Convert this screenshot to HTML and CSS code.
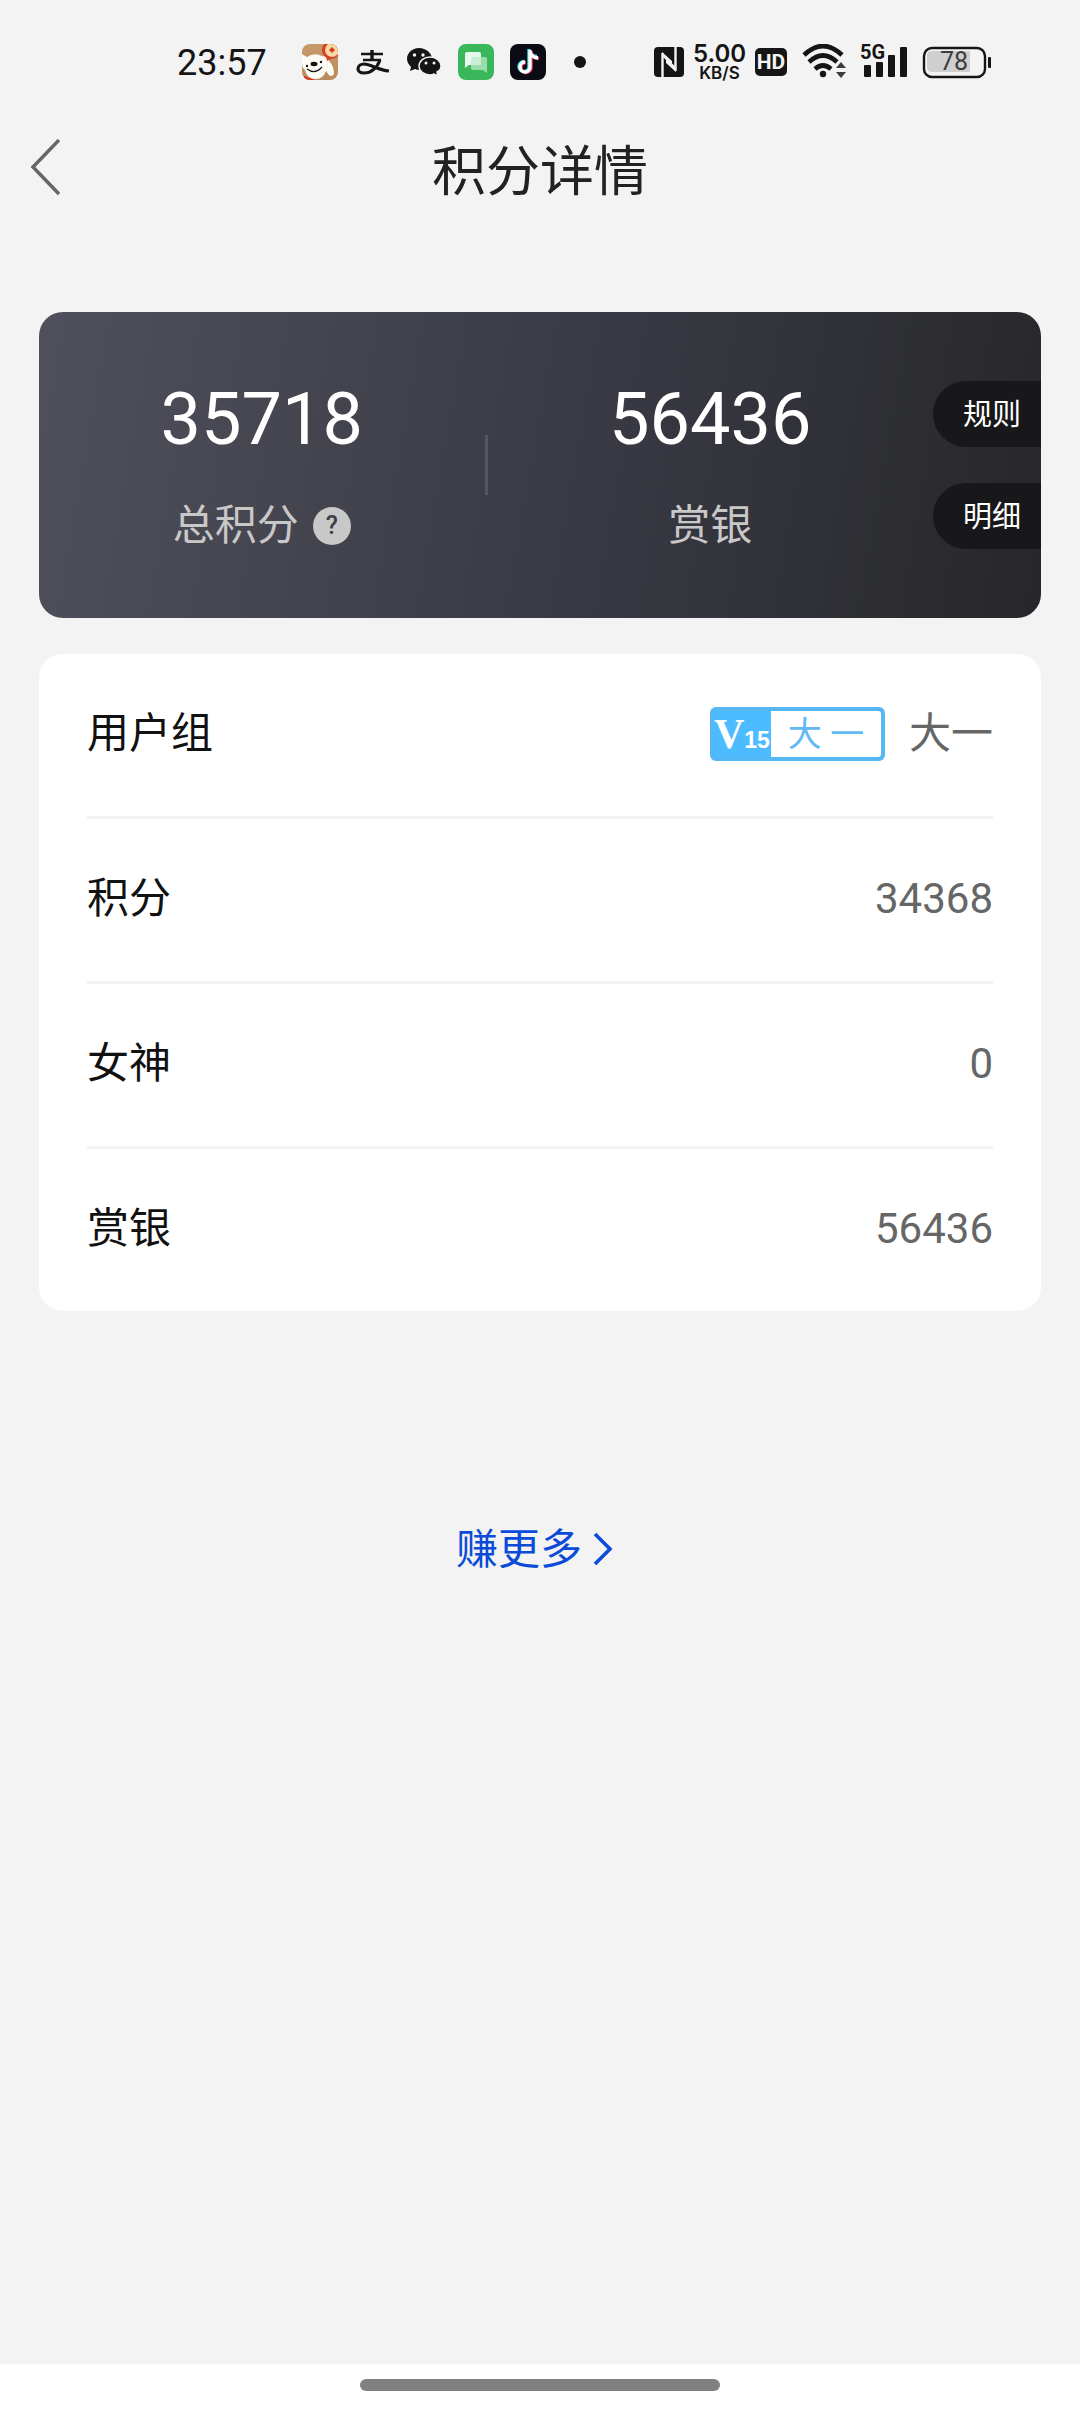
FILE: index.html
```html
<!DOCTYPE html>
<html lang="zh-CN">
<head>
    <meta charset="UTF-8">
    <title>积分详情</title>
    <meta name="viewport" content="width=device-width, initial-scale=1">
    <link rel="stylesheet" href="styles.css">
</head>
<body>
    <div class="status-bar">
        <div class="status-left">
            <span class="time">23:57</span>
            <div class="app-icons">
                <svg viewBox="0 0 36 36">
                    <defs>
                        <linearGradient id="tan" x1="0" y1="0" x2="0" y2="1">
                            <stop offset="0" stop-color="#c79a69"/>
                            <stop offset="1" stop-color="#b98a5b"/>
                        </linearGradient>
                        <clipPath id="tile"><rect width="36" height="36" rx="8"/></clipPath>
                    </defs>
                    <g clip-path="url(#tile)">
                        <rect width="36" height="36" fill="url(#tan)"/>
                        <path d="M0 10q3 2 5 3q7-5 15-1q5 0 7 5q5 5 5 13q-3 4-6 0q-1-2-2-3q-3 8-10 8Q5 35 3 26Q0 24 0 19z" fill="#fdfbf6"/>
                        <path d="M2 32q5 2 11 4H2z" fill="#d8301f"/>
                        <ellipse cx="12" cy="20" rx="3.500" ry="2.200" fill="#1a1512"/>
                        <circle cx="5" cy="22" r="1.200" fill="#1a1512"/>
                        <circle cx="19" cy="18" r="1.200" fill="#1a1512"/>
                        <path d="M5 25q8 6 15-2" fill="none" stroke="#1a1512" stroke-width="1.2"/>
                        <path d="M24 11l1 6 5-3z" fill="#dc3b21"/>
                        <circle cx="29" cy="6" r="9" fill="#dc3b21"/>
                        <circle cx="30" cy="6" r="7" fill="#f7d9a4"/>
                        <path d="M30 3l3 3-3 3-3-3z" fill="#dc3b21"/>
                    </g>
                </svg>
                <svg viewBox="0 0 36 36" fill="none" stroke="#151515">
                    <path d="M7 10h22M9 16h18" stroke-width="2.4"/>
                    <path d="M18 6v10" stroke-width="3.400"/>
                    <path d="M26 16c-3 8-9 13-16 13c-4 0-6-2-6-4c0-3 3-5 6-5c7 0 13 6 25 7" stroke-width="3.200"/>
                </svg>
                <svg viewBox="0 0 36 36" fill="#151515">
                    <path d="M13 4C6 4 1 9 1 15c0 3 2 6 4 8l-1 4 5-2q2 1 5 1c7 0 12-5 12-11S20 4 13 4z"/>
                    <path d="M24 13c-6 0-11 4-11 9s5 9 11 9q2 0 4-1l4 2-1-4c2-1 4-3 4-6 0-5-5-9-11-9z" stroke="#f3f3f3" stroke-width="1.4"/>
                    <g fill="#f3f3f3">
                        <circle cx="8.500" cy="11" r="1.700"/><circle cx="17" cy="11" r="1.700"/>
                        <circle cx="20" cy="19" r="1.500"/><circle cx="28" cy="19" r="1.500"/>
                    </g>
                </svg>
                <svg viewBox="0 0 36 36">
                    <rect width="36" height="36" rx="8" fill="#3bb75b"/>
                    <path d="M15 13h12q2 0 2 2v14l-4-3H15q-2 0-2-2v-9q0-2 2-2z" fill="#9bdcab"/>
                    <path d="M9 8h12q2 0 2 2v9q0 2-2 2H11l-4 3V10q0-2 2-2z" fill="#e9f8ed"/>
                    <path d="M15 13h8v6q0 2-2 2h-8v-6q0-2 2-2z" fill="#c9edd2"/>
                </svg>
                <svg viewBox="0 0 36 36" fill="none" stroke-width="3.400">
                    <rect width="36" height="36" rx="8" fill="#0b0b16"/>
                    <path d="M19 5v18a5 5 0 1 1-5-5.500M19 6q1 6 8 6.500" stroke="#2fe4e6"/>
                    <path d="M21 7v17a5 5 0 1 1-5-5.500M21 8q1 6 8 6.500" stroke="#f5375a"/>
                    <path d="M20 6v17.500a5 5 0 1 1-5-5.500M20 7q1 6.500 8 7" stroke="#fff"/>
                </svg>
                <svg viewBox="0 0 36 36"><circle cx="18" cy="18" r="6" fill="#151515"/></svg>
            </div>
        </div>
        <div class="status-right">
            <svg width="30" height="36" viewBox="0 0 30 36">
                <rect y="3" width="30" height="30" rx="4" fill="#151515"/>
                <path d="M8.500 33V9M21.500 3v24" fill="none" stroke="#f3f3f3" stroke-width="2.400"/>
                <path d="M8 8l10 9v5L8 12zM22 28L12 19v-5l10 9z" fill="#f3f3f3"/>
            </svg>
            <div class="speed">
                <span class="speed-value">5.00</span>
                <span class="speed-unit">KB/S</span>
            </div>
            <span class="hd">HD</span>
            <svg width="52" height="36" viewBox="0 0 52 36" fill="none" stroke="#151515" stroke-width="4.600">
                <path d="M9 11q19-18 38 0M14 18q14-13 28 0M20 25q8-7 16 0"/>
                <circle cx="28" cy="30" r="3.200" fill="#151515" stroke="none"/>
                <path d="M38 26l5-9 11-1v22H38z" fill="#f3f3f3" stroke="none"/>
                <path d="M41 24l5-6 5 6zM41 28h10l-5 6z" fill="#3c3c3c" stroke="none"/>
            </svg>
            <div class="signal">
                <span class="signal-type">5G</span>
                <svg width="52" height="36" viewBox="0 0 52 36" fill="#151515">
                    <rect x="9" y="21" width="7" height="12" rx="1"/>
                    <rect x="21" y="18" width="7" height="15" rx="1"/>
                    <rect x="33" y="11" width="7" height="22" rx="1"/>
                    <rect x="45" y="3" width="7" height="30" rx="1"/>
                </svg>
            </div>
            <div class="battery">
                <svg width="76" height="36" viewBox="0 0 76 36">
                    <path d="M17 7h38v21H17q-5 0-5-5V12q0-5 5-5z" fill="#cfcfcf"/>
                    <rect x="9" y="4" width="61" height="29" rx="8" fill="none" stroke="#151515" stroke-width="2.400"/>
                    <rect x="73" y="13" width="3" height="11" rx="1" fill="#151515"/>
                </svg>
                <span class="battery-level">78</span>
            </div>
        </div>
    </div>

    <header class="header">
        <button class="back" aria-label="返回">
            <svg width="30" height="58" viewBox="0 0 30 58" fill="none" stroke="#666" stroke-width="3.500">
                <path d="M29 1L3 28l26 27"/>
            </svg>
        </button>
        <h1 class="title">积分详情</h1>
    </header>

    <main class="content">
        <section class="summary">
            <div class="stat">
                <span class="stat-value">35718</span>
                <span class="stat-label">总积分 <button class="help" aria-label="说明">?</button></span>
            </div>
            <div class="divider"></div>
            <div class="stat">
                <span class="stat-value">56436</span>
                <span class="stat-label">赏银</span>
            </div>
            <div class="actions">
                <button class="action">规则</button>
                <button class="action">明细</button>
            </div>
        </section>

        <dl class="list">
            <div class="row">
                <dt>用户组</dt>
                <dd>
                    <span class="badge">
                        <span class="badge-level"><b>V</b><i>15</i></span>
                        <span class="badge-name">大 一</span>
                    </span>
                    大一
                </dd>
            </div>
            <div class="row"><dt>积分</dt><dd>34368</dd></div>
            <div class="row"><dt>女神</dt><dd>0</dd></div>
            <div class="row"><dt>赏银</dt><dd>56436</dd></div>
        </dl>

        <a class="more" href="#">赚更多<svg width="42" height="42" viewBox="0 0 42 42" fill="none" stroke="#0b4bd8" stroke-width="3.600">
            <path d="M13 5l15 15-15 15"/>
        </svg></a>
    </main>

    <div class="nav-bar"><div class="nav-handle"></div></div>
</body>
</html>
```

FILE: styles.css
```css
* {
    box-sizing: border-box;
}
body {
    margin: 0;
    min-height: 100vh;
    display: flex;
    flex-direction: column;
    background: #f3f3f3;
    color: #111;
    font-family: Roboto, "Noto Sans CJK SC", sans-serif;
    font-size: 42px;
}
button {
    padding: 0;
    border: none;
    background: none;
    font-family: inherit;
    cursor: pointer;
}
svg {
    display: block;
    flex: none;
}

/* status bar */
.status-bar {
    display: flex;
    justify-content: space-between;
    align-items: center;
    height: 124px;
    padding: 0 89px 0 177px;
    color: #151515;
}
.status-left {
    display: flex;
    align-items: center;
    gap: 35px;
}
.time {
    padding-top: 2px;
    font-size: 36px;
    line-height: 36px;
}
.app-icons {
    display: flex;
    gap: 16px;
}
.app-icons svg {
    width: 36px;
    height: 36px;
}
.status-right {
    display: flex;
    align-items: center;
    gap: 8px;
    font-family: Inter, sans-serif;
}
.speed {
    display: flex;
    flex-direction: column;
    align-items: center;
    width: 55px;
    font-weight: 600;
}
.speed-value {
    font-size: 24px;
    line-height: 23px;
}
.speed-unit {
    font-size: 17px;
    line-height: 17px;
}
.hd {
    width: 32px;
    border-radius: 5px;
    background: #151515;
    color: #f3f3f3;
    font-family: Roboto, sans-serif;
    font-size: 21px;
    font-weight: 700;
    line-height: 28px;
    text-align: center;
}
.signal,
.battery {
    position: relative;
}
.signal-type {
    position: absolute;
    top: -2px;
    left: 5px;
    font-family: Roboto, sans-serif;
    font-size: 20px;
    font-weight: 700;
    line-height: 20px;
}
.battery-level {
    position: absolute;
    top: 4px;
    left: 25px;
    color: #3c3c3c;
    font-family: Roboto, sans-serif;
    font-size: 25px;
    line-height: 28px;
}

/* title */
.header {
    display: grid;
    grid-template-columns: 1fr auto 1fr;
    align-items: center;
    height: 88px;
    padding: 0 30px;
}
.back {
    justify-self: start;
}
.title {
    margin: 0;
    padding-top: 10px;
    color: #222;
    font-size: 54px;
    font-weight: 400;
    line-height: 78px;
}

.content {
    flex: 1;
    display: flex;
    flex-direction: column;
    padding: 100px 39px 0;
}

/* points card */
.summary {
    display: flex;
    align-items: center;
    height: 306px;
    border-radius: 24px;
    background: linear-gradient(100deg, #50505c, #2f2f38 80%, #2e2f32 82%, #27272b);
    overflow: hidden;
}
.stat {
    flex: 1;
    display: flex;
    flex-direction: column;
    align-items: center;
    gap: 43px;
    padding-bottom: 6px;
}
.stat-value {
    color: #fff;
    font-size: 72px;
    line-height: 84px;
}
.stat-label {
    display: flex;
    align-items: center;
    gap: 14px;
    color: #c8c8c8;
    line-height: 42px;
}
.help {
    width: 38px;
    height: 38px;
    border-radius: 50%;
    background: #c8c8c8;
    color: #3f3f48;
    font-size: 25px;
    font-weight: 500;
    line-height: 38px;
}
.divider {
    width: 3px;
    height: 60px;
    background: #55555e;
}
.actions {
    display: flex;
    flex-direction: column;
    gap: 36px;
}
.action {
    width: 108px;
    height: 66px;
    padding: 0 0 4px 10px;
    border-radius: 33px 0 0 33px;
    background: #18181b;
    color: #fff;
    font-size: 29px;
}

/* details */
.list {
    margin: 36px 0 0;
    padding: 0 48px;
    border-radius: 24px;
    background: #fff;
}
.row {
    display: flex;
    justify-content: space-between;
    align-items: center;
    height: 162px;
    padding-bottom: 2px;
    line-height: 60px;
}
.row + .row {
    height: 165px;
    border-top: 3px solid #f3f3f3;
}
.row dd {
    display: flex;
    align-items: center;
    gap: 24px;
    margin: 0;
    color: #666;
}
.badge {
    display: flex;
    width: 175px;
    height: 54px;
    border: 4px solid #55b7f3;
    border-radius: 6px;
    background: #4dbbff;
}
.badge-level {
    display: flex;
    align-items: baseline;
    width: 57px;
    color: #fff;
    line-height: 46px;
}
.badge-level b {
    font-family: "Liberation Serif", serif;
    font-size: 42px;
}
.badge-level i {
    font-family: "Liberation Sans", sans-serif;
    font-size: 23px;
    font-style: normal;
    font-weight: 700;
}
.badge-name {
    flex: 1;
    border-radius: 0 3px 3px 0;
    background: #fff;
    color: #62b8f2;
    font-size: 34px;
    line-height: 46px;
    text-align: center;
}

.more {
    display: flex;
    align-items: center;
    align-self: center;
    margin-top: 208px;
    color: #0b4bd8;
    line-height: 62px;
    text-decoration: none;
}

/* gesture bar */
.nav-bar {
    display: flex;
    justify-content: center;
    height: 48px;
    padding-top: 15px;
    background: #fff;
}
.nav-handle {
    width: 360px;
    height: 12px;
    border-radius: 6px;
    background: #808080;
}
```
